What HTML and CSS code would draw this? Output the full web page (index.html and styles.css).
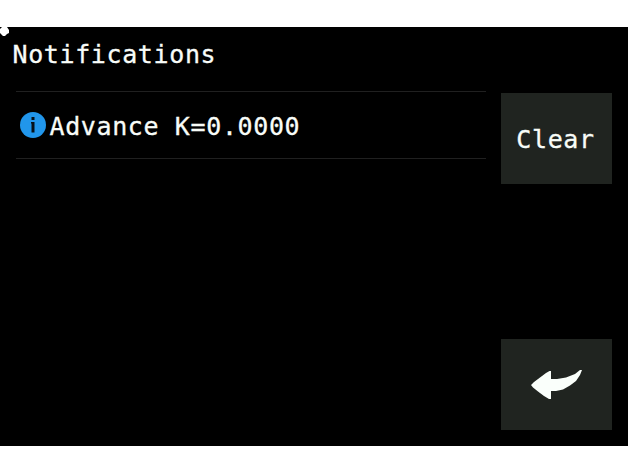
FILE: index.html
```html
<!DOCTYPE html>
<html lang="en">
<head>
<meta charset="utf-8">
<title>Notifications</title>
<link rel="stylesheet" href="styles.css">
</head>
<body>
<div class="screen">
  <svg class="cursor" viewBox="0 0 10 10"><path d="M0 2 L2 0 H7 L9 3 V6 L7 7 L5 9 H3 L0 6 Z" fill="#fff"/></svg>
  <h1 class="title">Notifications</h1>
  <div class="content">
    <ul class="list">
      <li class="item">
        <svg class="info" viewBox="0 0 26 26"><circle cx="13" cy="13" r="13" fill="#2196eb"/><path d="M11.5 5h3v3h-3zM11 10h3.5v10.5h-3v-9h-.5z" fill="#061018"/></svg>
        <span class="message">Advance K=0.0000</span>
      </li>
    </ul>
    <div class="actions">
      <button class="button clear">Clear</button>
      <button class="button" aria-label="Back">
        <svg class="back" viewBox="0 0 52 30"><path d="M0 15 L3 12 L9 7.5 L15 3 L18.5 1 H20 V9 H26 L35 7.5 L44 4 L49 0 H51 L49 5 L45 11 L39 15.5 L32 19.5 L25 21 H20 V29 H18 L13 26 L7 21.5 L2 17.5 Z" fill="#fafffb"/></svg>
      </button>
    </div>
  </div>
</div>
</body>
</html>
```
FILE: styles.css
```css
* {
  box-sizing: border-box;
}

body {
  margin: 0;
  padding-top: 27px;
  background: #fff;
}

.screen {
  position: relative;
  height: 419px;
  background: #000;
  color: #f8fcf8;
  font: 25px/30px "DejaVu Sans Mono", monospace;
  letter-spacing: 0.62px;
  -webkit-text-stroke: 0.3px;
}

.cursor {
  position: absolute;
  left: 0;
  top: 0;
  width: 10px;
  height: 10px;
}

.title {
  margin: 0;
  padding: 13px 0 0 12.5px;
  height: 64px;
  font: inherit;
}

.content {
  display: flex;
  gap: 15px;
  padding: 0 16px 0 16px;
}

.list {
  flex: 1;
  margin: 0;
  padding: 0;
  list-style: none;
}

.item {
  display: flex;
  align-items: center;
  gap: 4px;
  height: 68px;
  padding-left: 3.5px;
  border: solid #202020;
  border-width: 1px 0;
}

.info {
  width: 26px;
  height: 26px;
}

.message {
  padding-top: 3px;
}

.actions {
  display: flex;
  flex-direction: column;
  gap: 155px;
  padding-top: 2px;
}

.button {
  display: flex;
  align-items: center;
  justify-content: center;
  width: 111px;
  height: 91px;
  padding: 0;
  border: 0;
  background: #202420;
  color: inherit;
  font: inherit;
  letter-spacing: inherit;
}

.clear {
  padding: 2px 2px 0 0;
}

.back {
  width: 52px;
  height: 30px;
}
```
